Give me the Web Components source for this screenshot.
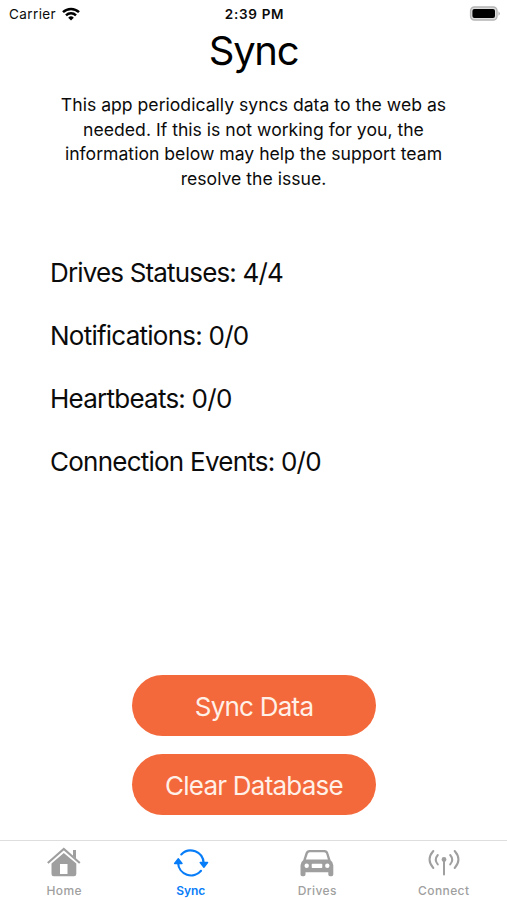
<!DOCTYPE html>
<html lang="en">
<head>
<meta charset="utf-8">
<meta name="viewport" content="width=device-width, initial-scale=1">
<title>Sync</title>
<style>
    body {
        margin: 0;
        background: #fff;
        color: #0b0b0b;
        font-family: Inter, "Liberation Sans", sans-serif;
    }
</style>
</head>
<body>

<sync-app>
    <status-bar slot="status" carrier="Carrier" time="2:39 PM"></status-bar>
    <sync-header slot="header" titulo="Sync">
        This app periodically syncs data to the web as<br>
        needed. If this is not working for you, the<br>
        information below may help the support team<br>
        resolve the issue.
    </sync-header>
    <sync-count style="--spacing: -0.84px">Drives Statuses: 4/4</sync-count>
    <sync-count>Notifications: 0/0</sync-count>
    <sync-count>Heartbeats: 0/0</sync-count>
    <sync-count>Connection Events: 0/0</sync-count>
    <action-button slot="actions">Sync Data</action-button>
    <action-button slot="actions">Clear Database</action-button>
    <tab-bar slot="tabs">
        <tab-item icon="home">Home</tab-item>
        <tab-item icon="sync" active>Sync</tab-item>
        <tab-item icon="drives">Drives</tab-item>
        <tab-item icon="connect">Connect</tab-item>
    </tab-bar>
</sync-app>

<script>
// Page frame: status bar, header, counters, buttons and tabs from top to bottom
class SyncApp extends HTMLElement {
    constructor() {
        super();
        this.attachShadow({ mode: "open" });
        this.shadowRoot.innerHTML = `
        <style>
            :host {
                display: flex;
                flex-direction: column;
                height: 900px;
                overflow: hidden;
            }
            .counts {
                display: flex;
                flex-direction: column;
                padding: 50px 50px 0;
            }
            .actions {
                display: flex;
                flex-direction: column;
                align-items: center;
                gap: 18px;
                margin-top: auto;
                padding: 0 0 25px 1px;
            }
        </style>
        <slot name="status"></slot>
        <slot name="header"></slot>
        <div class="counts"><slot></slot></div>
        <div class="actions"><slot name="actions"></slot></div>
        <slot name="tabs"></slot>
        `;
    }
}
customElements.define("sync-app", SyncApp);


class StatusBar extends HTMLElement {
    constructor() {
        super();
        this.attachShadow({ mode: "open" });
        const carrier = this.getAttribute("carrier") || "";
        const time = this.getAttribute("time") || "";
        this.shadowRoot.innerHTML = `
        <style>
            :host {
                display: grid;
                grid-template-columns: 1fr auto 1fr;
                align-items: center;
                height: 26px;
                padding: 0 7px 0 9px;
                font-size: 13.5px;
                line-height: 26px;
            }
            .left {
                display: flex;
                align-items: center;
                gap: 5.5px;
                letter-spacing: 0.4px;
            }
            .left span, .time {
                padding-top: 1px;
            }
            .time {
                font-weight: 600;
                letter-spacing: 0.7px;
            }
            .battery {
                justify-self: end;
            }
            svg {
                display: block;
            }
        </style>
        <div class="left">
            <span>${carrier}</span>
            <svg width="18" height="14" viewBox="0 0 18 14" fill="none" stroke="#000" stroke-width="2.5">
                <path d="M1 5.1a11.6 11.6 0 0 1 16 0"/>
                <path d="M4 8.3a7.3 7.3 0 0 1 10 0"/>
                <path d="M9 13.5L6.2 10.7a4 4 0 0 1 5.6 0z" fill="#000" stroke="none"/>
            </svg>
        </div>
        <span class="time">${time}</span>
        <svg class="battery" width="31" height="15" viewBox="0 0 31 15">
            <rect x="1.6" y="1" width="26.4" height="13" rx="3.8" fill="#ddd" stroke="#b4b4b4" stroke-width="1.4"/>
            <rect x="3.4" y="2.9" width="22.6" height="9.2" rx="2" fill="#000"/>
            <path d="M29.5 5.2q2.6 2.3 0 4.6z" fill="#aaa"/>
        </svg>
        `;
    }
}
customElements.define("status-bar", StatusBar);


class SyncHeader extends HTMLElement {
    constructor() {
        super();
        this.attachShadow({ mode: "open" });
        const titulo = this.getAttribute("titulo") || "";
        this.shadowRoot.innerHTML = `
        <style>
            :host {
                display: block;
                text-align: center;
            }
            h1 {
                margin: 0;
                color: #000;
                font-size: 40px;
                font-weight: 400;
                line-height: 49px;
                letter-spacing: -1.3px;
            }
            p {
                margin: 18px 0 0;
                font-size: 17.6px;
                line-height: 24.5px;
                letter-spacing: 0.01px;
            }
        </style>
        <h1>${titulo}</h1>
        <p><slot></slot></p>
        `;
    }
}
customElements.define("sync-header", SyncHeader);


class SyncCount extends HTMLElement {
    constructor() {
        super();
        this.attachShadow({ mode: "open" });
        this.shadowRoot.innerHTML = `
        <style>
            :host {
                display: block;
                height: 63px;
                font-size: 26px;
                line-height: 63px;
                letter-spacing: var(--spacing, -0.76px);
                white-space: nowrap;
            }
        </style>
        <slot></slot>
        `;
    }
}
customElements.define("sync-count", SyncCount);


class ActionButton extends HTMLElement {
    constructor() {
        super();
        this.attachShadow({ mode: "open" });
        this.shadowRoot.innerHTML = `
        <style>
            button {
                display: block;
                width: 244px;
                height: 61px;
                padding: 2px 0 0;
                border: 0;
                border-radius: 31px;
                background: #f4693b;
                color: #fff0e8;
                font: inherit;
                font-size: 26px;
                letter-spacing: -0.77px;
            }
        </style>
        <button><slot></slot></button>
        `;
    }
}
customElements.define("action-button", ActionButton);


class TabBar extends HTMLElement {
    constructor() {
        super();
        this.attachShadow({ mode: "open" });
        this.shadowRoot.innerHTML = `
        <style>
            :host {
                display: grid;
                grid-template-columns: repeat(4, 1fr);
                box-sizing: border-box;
                height: 60px;
                padding-left: 1px;
                border-top: 1px solid #dedede;
            }
        </style>
        <slot></slot>
        `;
    }
}
customElements.define("tab-bar", TabBar);


const icons = {
    home: `
        <path d="M1.8 17L17.800 3l16 14" fill="none" stroke="currentColor" stroke-width="2.1"/>
        <path d="M27 4h3v8.500l-3-2.600z" fill="currentColor"/>
        <path d="M5.500 17.500L17.800 6.900l12.500 10.600V28q0 2.300-2.300 2.300H7.800q-2.300 0-2.300-2.300zM14 18v10h7.500V18z" fill="currentColor" fill-rule="evenodd"/>`,
    sync: `
        <g fill="none" stroke="currentColor" stroke-width="2.2" stroke-linecap="round">
            <path d="M8.300 8.400A13 13 0 0 1 30.600 17"/>
            <path d="M28 24.800A13 13 0 0 1 5.100 17"/>
        </g>
        <path d="M27.200 16.500h7.400L30.900 21.300zM1.600 17.500H9L5.300 12.700z" fill="currentColor" stroke="currentColor" stroke-width="1.400" stroke-linejoin="round"/>`,
    drives: `
        <path fill="currentColor" fill-rule="evenodd" d="M10.500 4h15q3 0 3.800 3l2.300 7.200q2.700 1.800 2.700 5V28.500q0 1.800-1.800 1.800h-1.400q-1.800 0-1.800-1.800v-2.300H6.500v2.300q0 1.800-1.800 1.800H3.300q-1.800 0-1.800-1.800v-9.300q0-3.200 2.700-5L6.500 7q1-3 4-3zM10.800 6.200q-1.500 0-2 1.500L6.900 13.500h22L27.200 7.700q-.5-1.500-2-1.500zM7.700 17.600a2.200 2.200 0 1 0 0 4.400a2.200 2.200 0 1 0 0-4.400zM28.300 17.600a2.200 2.200 0 1 0 0 4.400a2.200 2.200 0 1 0 0-4.400zM13.500 17.700q-.8 0-.8.8v2.700q0 .8.8.8h9q.8 0 .8-.8v-2.700q0-.8-.8-.8z"/>`,
    connect: `
        <g fill="none" stroke="currentColor" stroke-width="2" stroke-linecap="round">
            <path d="M7.300 5q-7.500 8.500 0 17M28.700 5q7.500 8.500 0 17"/>
            <path d="M11.800 9q-4 4.700 0 9.400M24.200 9q4 4.700 0 9.400"/>
            <path d="M18 14v14.500"/>
        </g>
        <circle cx="18" cy="13.500" r="2.400" fill="currentColor"/>`
};

class TabItem extends HTMLElement {
    constructor() {
        super();
        this.attachShadow({ mode: "open" });
        const icon = this.getAttribute("icon");
        this.shadowRoot.innerHTML = `
        <style>
            :host {
                display: flex;
                flex-direction: column;
                align-items: center;
                padding-top: 5px;
                color: #9f9f9f;
                font-size: 12px;
                font-weight: 500;
                line-height: 18px;
                letter-spacing: 0.4px;
            }
            :host([active]) {
                color: #087df8;
                letter-spacing: 0;
                font-weight: 600;
            }
            svg {
                display: block;
                margin-bottom: 2px;
            }
        </style>
        <svg width="36" height="34" viewBox="0 0 36 34">${icons[icon] || ""}</svg>
        <span><slot></slot></span>
        `;
    }
}
customElements.define("tab-item", TabItem);
</script>
</body>
</html>
